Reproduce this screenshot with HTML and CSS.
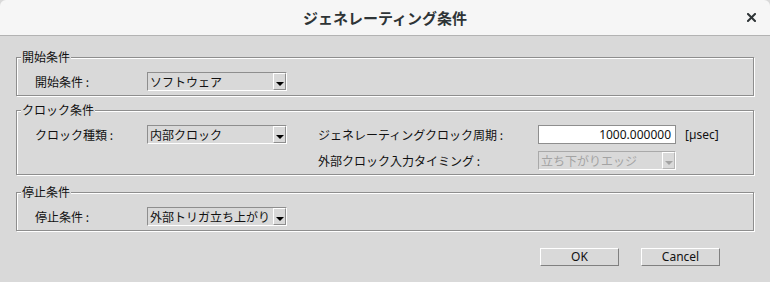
FILE: index.html
```html
<!DOCTYPE html>
<html lang="ja">
<head>
<meta charset="utf-8">
<title>ジェネレーティング条件</title>
<link rel="stylesheet" href="styles.css">
</head>
<body>
<div class="window">
  <div class="titlebar">
    <span class="title">ジェネレーティング条件</span>
    <span class="close" aria-label="close">
      <svg width="9" height="9" viewBox="0 0 9 9"><path d="M1 1 L8 8 M8 1 L1 8" stroke="#2e3436" stroke-width="2" stroke-linecap="square"/></svg>
    </span>
  </div>
  <div class="content">
    <section class="group g1">
      <div class="legend"><span>開始条件</span></div>
      <div class="rows">
        <div class="label">開始条件 :</div>
        <div class="combo"><span class="combo-text">ソフトウェア</span><span class="combo-btn"><i class="arrow"></i></span></div>
      </div>
    </section>
    <section class="group g2">
      <div class="legend"><span>クロック条件</span></div>
      <div class="rows">
        <div class="label">クロック種類 :</div>
        <div class="combo"><span class="combo-text">内部クロック</span><span class="combo-btn"><i class="arrow"></i></span></div>
        <div class="spacer"></div>
        <div class="label">ジェネレーティングクロック周期 :</div>
        <div class="field">1000.000000</div>
        <div class="unit">[µsec]</div>
        <div class="skip"></div>
        <div class="label">外部クロック入力タイミング :</div>
        <div class="combo disabled"><span class="combo-text">立ち下がりエッジ</span><span class="combo-btn"><i class="arrow"></i></span></div>
      </div>
    </section>
    <section class="group g3">
      <div class="legend"><span>停止条件</span></div>
      <div class="rows">
        <div class="label">停止条件 :</div>
        <div class="combo"><span class="combo-text">外部トリガ立ち上がり</span><span class="combo-btn"><i class="arrow"></i></span></div>
      </div>
    </section>
    <div class="buttons">
      <button class="btn">OK</button>
      <button class="btn">Cancel</button>
    </div>
  </div>
</div>
</body>
</html>
```

FILE: styles.css
```css
* { box-sizing: border-box; }
html, body { margin: 0; padding: 0; }
body {
  width: 770px;
  height: 282px;
  overflow: hidden;
  background: #d9d9d9;
  font-family: "Noto Sans", "Noto Sans CJK JP", sans-serif;
  font-size: 12px;
  color: #111;
}
.window { width: 770px; height: 282px; background: #d9d9d9; }
.titlebar {
  height: 36px;
  background: #f6f6f6;
  border-bottom: 1px solid #b3b3b3;
  border-radius: 6px 6px 0 0;
  display: flex;
  align-items: center;
  justify-content: center;
  position: relative;
}
.title {
  font-family: "Noto Sans CJK JP", sans-serif;
  font-weight: bold;
  font-size: 15px;
  line-height: 18px;
  color: #2e3436;
  margin-top: 1px;
}
.close {
  position: absolute;
  left: 747px;
  top: 13px;
  width: 9px;
  height: 9px;
  display: block;
}
.close svg { display: block; }
.content { padding: 0 16px; }
.group {
  border: 1px solid #8e8e8e;
  box-shadow: inset 1px 1px 0 #fff, 1px 1px 0 #fff;
  padding: 0 0 4px 18px;
}
.g1 { margin-top: 21px; }
.g2 { margin-top: 14px; }
.g3 { margin-top: 17px; }
.legend {
  height: 16px;
  line-height: 16px;
  margin-top: -9px;
  margin-left: -14px;
}
.legend span {
  display: inline-block;
  background: #d9d9d9;
  padding: 0 1px;
  font-family: "Noto Sans CJK JP", sans-serif;
}
.rows {
  margin-top: 7px;
  display: grid;
  grid-template-columns: 112px 140px 31px 220px 138px auto;
  grid-auto-rows: 19px;
  row-gap: 7px;
  align-items: center;
}
.label {
  font-family: "Noto Sans CJK JP", sans-serif;
  line-height: 19px;
  white-space: nowrap;
}
.skip { grid-column: span 3; }
.combo {
  height: 19px;
  display: flex;
  align-items: stretch;
  border-top: 1px solid #8e8e8e;
  border-left: 1px solid #8e8e8e;
  border-bottom: 1px solid #fff;
  border-right: 1px solid #fff;
  background: #d9d9d9;
}
.combo-text {
  flex: 1;
  padding-left: 2px;
  font-family: "Noto Sans CJK JP", sans-serif;
  line-height: 17px;
  white-space: nowrap;
  overflow: hidden;
}
.combo-btn {
  width: 13px;
  margin-right: 0;
  border-top: 1px solid #fff;
  border-left: 1px solid #fff;
  border-bottom: 1px solid #8e8e8e;
  border-right: 1px solid #8e8e8e;
  display: flex;
  justify-content: center;
  align-items: flex-end;
  padding-bottom: 3px;
}
.arrow {
  display: block;
  width: 0;
  height: 0;
  border-left: 4px solid transparent;
  border-right: 4px solid transparent;
  border-top: 4px solid #000;
}
.combo.disabled { border-top-color: #a9a9a9; border-left-color: #a9a9a9; }
.combo.disabled .combo-text { color: #a3a3a3; }
.combo.disabled .combo-btn { border-bottom-color: #b5b5b5; border-right-color: #b5b5b5; }
.combo.disabled .arrow { border-top-color: #a3a3a3; }
.field {
  height: 19px;
  background: #fff;
  border: 1px solid #8e8e8e;
  text-align: right;
  padding-right: 4px;
  line-height: 17px;
  font-family: "Noto Sans", sans-serif;
}
.unit {
  padding-left: 9px;
  line-height: 19px;
  font-family: "Noto Sans", sans-serif;
}
.buttons {
  display: flex;
  justify-content: flex-end;
  gap: 22px;
  margin-top: 17px;
  padding-right: 34px;
}
.btn {
  width: 79px;
  height: 18px;
  margin: 0;
  padding: 0;
  background: #d9d9d9;
  border-top: 1px solid #fff;
  border-left: 1px solid #fff;
  border-bottom: 1px solid #808080;
  border-right: 1px solid #808080;
  font-family: "Noto Sans", sans-serif;
  font-size: 12px;
  line-height: 16px;
  color: #111;
}
```
